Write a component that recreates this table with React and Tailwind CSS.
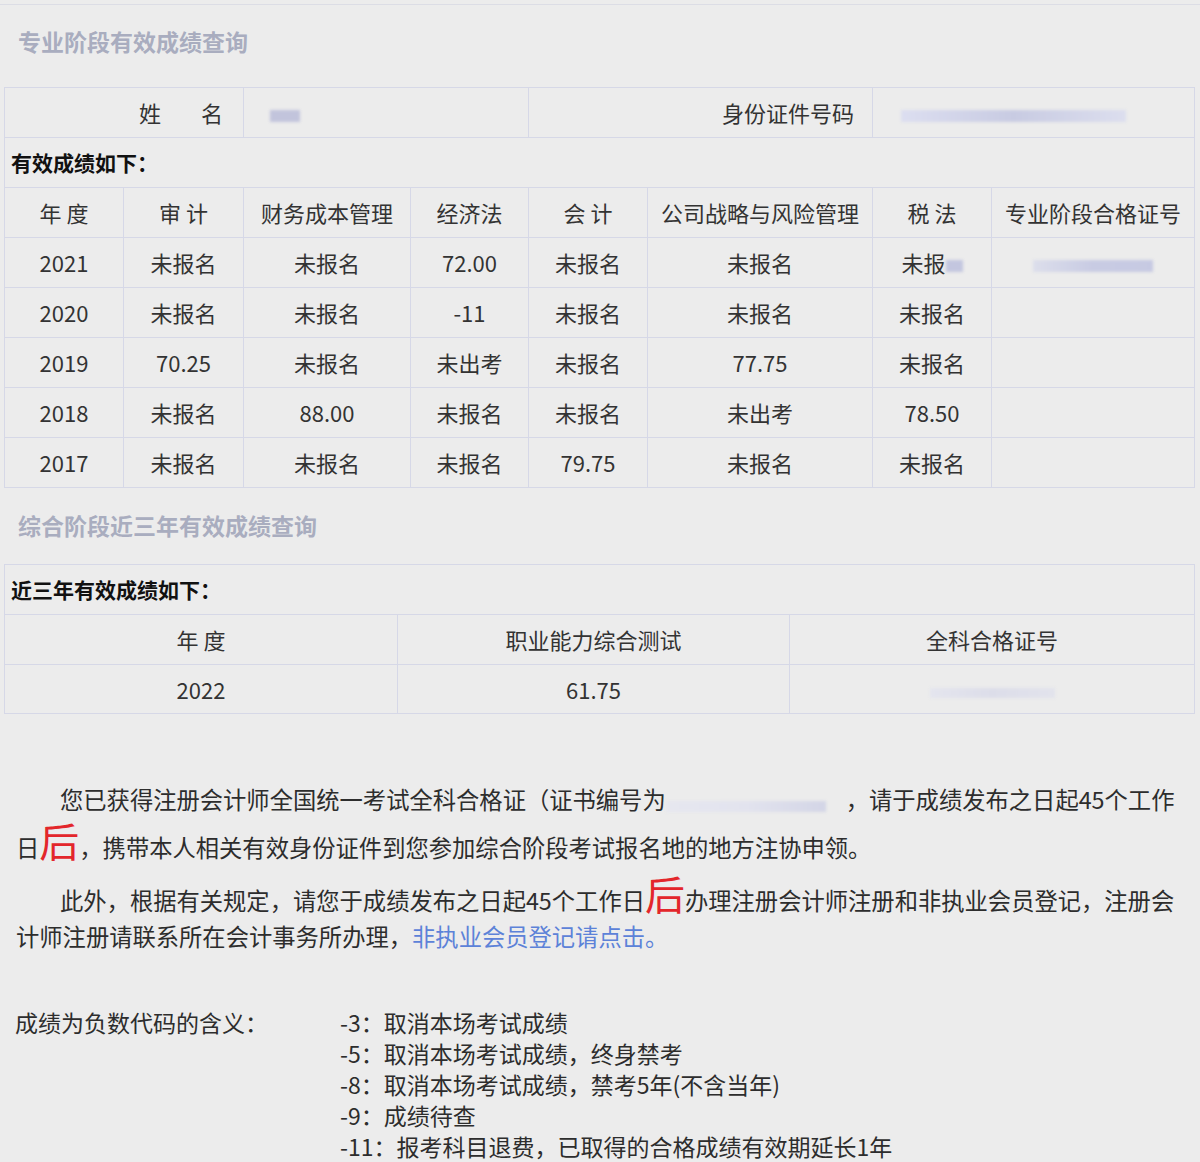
import React from "react";

const line = "border border-[#d6d8e7]";

const grades = [
  ["2021", "未报名", "未报名", "72.00", "未报名", "未报名", "tax-blur", "cert-blur"],
  ["2020", "未报名", "未报名", "-11", "未报名", "未报名", "未报名", ""],
  ["2019", "70.25", "未报名", "未出考", "未报名", "77.75", "未报名", ""],
  ["2018", "未报名", "88.00", "未报名", "未报名", "未出考", "78.50", ""],
  ["2017", "未报名", "未报名", "未报名", "79.75", "未报名", "未报名", ""],
];

const heads = ["年 度", "审 计", "财务成本管理", "经济法", "会 计", "公司战略与风险管理", "税 法", "专业阶段合格证号"];
const widths = [119, 120, 167, 118, 119, 225, 119, 203];

const codes = [
  "-3：取消本场考试成绩",
  "-5：取消本场考试成绩，终身禁考",
  "-8：取消本场考试成绩，禁考5年(不含当年)",
  "-9：成绩待查",
  "-11：报考科目退费，已取得的合格成绩有效期延长1年",
];

// blurred-out personal data
const Blur = ({ className }) => (
  <span className={`inline-block align-middle blur-[1.5px] ${className}`} />
);

const Title = ({ children, className = "" }) => (
  <h2 className={`pl-[18px] text-[23px] leading-[28px] font-bold text-[#a9adbf] ${className}`}>
    {children}
  </h2>
);

// the oversized red character; zero line-height so the line box keeps its height
const Big = () => (
  <span className="text-[40px] leading-[0px] text-[#e3262b]">后</span>
);

function Cell({ v }) {
  if (v === "tax-blur")
    return (
      <span>
        未报<Blur className="h-[12px] w-[17px] bg-[#c3c6df]" />
      </span>
    );
  if (v === "cert-blur")
    return <Blur className="h-[12px] w-[120px] bg-gradient-to-r from-[#dcdeeb] via-[#c8cbe3] to-[#c6c9e2]" />;
  return v;
}

export default function App() {
  return (
    <div className="min-h-screen bg-[#ececec] text-[#333] font-['Noto_Sans_CJK_SC','Noto_Sans',sans-serif]">
      <div className="h-[5px] border-b border-[#dcdde5]" />
      <Title className="pt-[22px]">专业阶段有效成绩查询</Title>

      {/* 专业阶段 */}
      <div className="ml-[4px] mt-[32px] w-[1190px]">
        <table className="w-full table-fixed border-collapse text-[22px]">
          <colgroup>
            <col className="w-[239px]" />
            <col className="w-[285px]" />
            <col className="w-[344px]" />
            <col className="w-[322px]" />
          </colgroup>
          <tbody>
            <tr className="h-[50px]">
              <td className={`${line} pr-[20px] text-right`}>
                <span>姓</span>
                <span className="ml-[40px]">名</span>
              </td>
              <td className={`${line} pl-[26px]`}>
                <Blur className="h-[12px] w-[30px] bg-[#c2c4dc]" />
              </td>
              <td className={`${line} pr-[18px] text-right`}>身份证件号码</td>
              <td className={`${line} pl-[28px]`}>
                <Blur className="h-[12px] w-[225px] bg-gradient-to-r from-[#dcdef0] via-[#c8cbe2] to-[#dcdeee]" />
              </td>
            </tr>
            <tr className="h-[50px]">
              <td colSpan={4} className={`${line} pl-[6px] text-[21px] font-bold text-[#111]`}>
                有效成绩如下：
              </td>
            </tr>
          </tbody>
        </table>
        <table className="-mt-px w-full table-fixed border-collapse text-[22px]">
          <colgroup>
            {widths.map((w, i) => (
              <col key={i} style={{ width: w }} />
            ))}
          </colgroup>
          <thead>
            <tr className="h-[50px]">
              {heads.map((h) => (
                <th key={h} className={`${line} text-center font-normal whitespace-pre`}>
                  {h}
                </th>
              ))}
            </tr>
          </thead>
          <tbody>
            {grades.map((r) => (
              <tr key={r[0]} className="h-[50px]">
                {r.map((v, i) => (
                  <td key={i} className={`${line} text-center`}>
                    <Cell v={v} />
                  </td>
                ))}
              </tr>
            ))}
          </tbody>
        </table>
      </div>

      {/* 综合阶段 */}
      <Title className="mt-[23px]">综合阶段近三年有效成绩查询</Title>
      <div className="ml-[4px] mt-[25px] w-[1190px]">
        <table className="w-full table-fixed border-collapse text-[22px]">
          <colgroup>
            <col className="w-[393px]" />
            <col className="w-[392px]" />
            <col className="w-[405px]" />
          </colgroup>
          <tbody>
            <tr className="h-[50px]">
              <td colSpan={3} className={`${line} pl-[6px] text-[21px] font-bold text-[#111]`}>
                近三年有效成绩如下：
              </td>
            </tr>
            <tr className="h-[50px]">
              <td className={`${line} text-center whitespace-pre`}>年 度</td>
              <td className={`${line} text-center`}>职业能力综合测试</td>
              <td className={`${line} text-center`}>全科合格证号</td>
            </tr>
            <tr className="h-[49px]">
              <td className={`${line} text-center`}>2022</td>
              <td className={`${line} text-center`}>61.75</td>
              <td className={`${line} text-center`}>
                <Blur className="h-[10px] w-[125px] bg-gradient-to-r from-[#e4e5ee] via-[#dcdde9] to-[#e2e3ec]" />
              </td>
            </tr>
          </tbody>
        </table>
      </div>

      {/* 说明 */}
      <div className="mt-[59px] px-[16px] text-[23.3px] text-[#2d2d2d]">
        <p className="pt-[4px] indent-[44px] leading-[44px]">
          您已获得注册会计师全国统一考试全科合格证（证书编号为
          <span className="inline-block w-[180px] indent-0 align-middle">
            <Blur className="h-[11px] w-[160px] bg-gradient-to-r from-[#e6e7ef] via-[#e2e3ee] to-[#d3d5e6]" />
          </span>
          ，请于成绩发布之日起45个工作日
          <Big />
          ，携带本人相关有效身份证件到您参加综合阶段考试报名地的地方注协申领。
        </p>
        <p className="mt-[13px] indent-[44px] leading-[36px]">
          此外，根据有关规定，请您于成绩发布之日起45个工作日
          <Big />
          办理注册会计师注册和非执业会员登记，注册会计师注册请联系所在会计事务所办理，
          <a href="#" className="text-[#5c82d8]">
            非执业会员登记请点击。
          </a>
        </p>
      </div>

      <div className="mt-[53px] flex pl-[15px] text-[23px] leading-[31px] text-[#2d2d2d]">
        <div className="w-[325px] shrink-0">成绩为负数代码的含义：</div>
        <ul>
          {codes.map((c) => (
            <li key={c}>{c}</li>
          ))}
        </ul>
      </div>
    </div>
  );
}
